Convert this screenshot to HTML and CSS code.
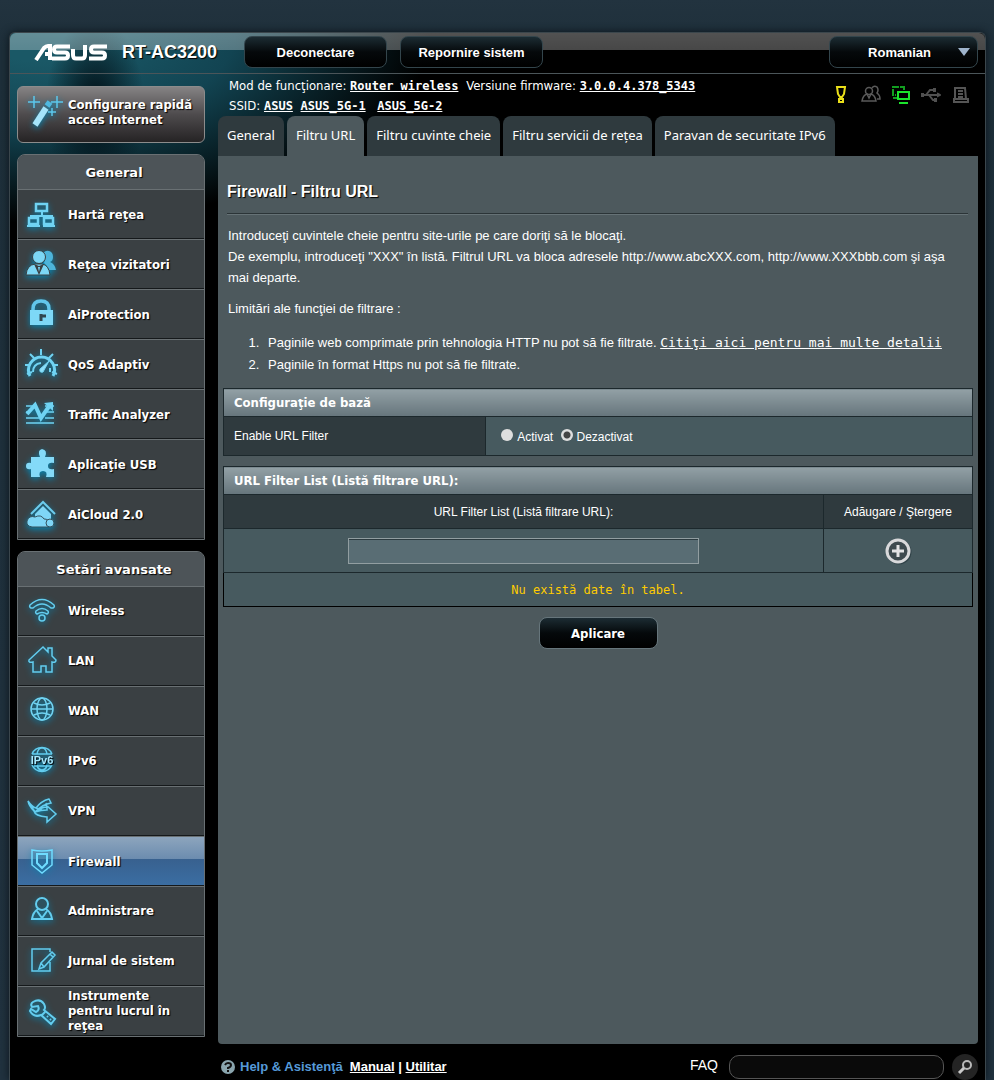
FILE: index.html
```html
<!DOCTYPE html>
<html lang="ro">
<head>
<meta charset="utf-8">
<title>ASUS RT-AC3200 - Filtru URL</title>
<link rel="stylesheet" href="styles.css">
</head>
<body>
<div class="frame">
  <header class="topbar">
    <svg class="logo" width="73" height="17" viewBox="0 0 73 17" role="img" aria-label="ASUS" fill="none" stroke="#fff" stroke-width="4">
      <path d="M2 16 10 4q2-2 4-2h2v14M11 10h5M36 2.500H23q-3 0-3 3t3 3h8q3 0 3 3t-3 3H18M39 5v6q0 3.500 3 3.500h6q3 0 3-3.500V1M73 2.500H60q-3 0-3 3t3 3h8q3 0 3 3t-3 3H55"/>
    </svg>
    <span class="model">RT-AC3200</span>
    <button class="btn btn-top" type="button">Deconectare</button>
    <button class="btn btn-top" type="button">Repornire sistem</button>
    <div class="lang">
      <select class="btn lang-select" aria-label="Limbă"><option>Romanian</option></select>
      <svg class="lang-arrow" width="12" height="8" viewBox="0 0 12 8"><path fill="#9fb4cc" d="M0 0h12L6 8z"/></svg>
    </div>
  </header>

  <div class="columns">
    <nav class="sidebar">
      <a class="quick" href="#">
        <svg class="ico" width="36" height="36" viewBox="0 0 36 36" fill="none" stroke="#5cc8ec"><path stroke-width="6" stroke="#a5e4fa" d="M7 31 18 14"/><path stroke-width="6" stroke="#4fb9e0" d="m19 12 3-4"/><path stroke-width="1.500" d="M6 2v12M0 8h12M29 2v12M23 8h12M24 14v8M20 18h8"/></svg>
        <span>Configurare rapidă acces Internet</span>
      </a>

      <section class="menu">
        <h2 class="menu-title">General</h2>
        <a class="item" href="#"><svg class="ico" width="34" height="34" viewBox="0 0 34 34" fill="none" stroke="#6fd3f3" stroke-width="2.500"><path d="M11 6h11v7H11zM4 20h9v6H4zM19 20h9v6h-9z"/><path stroke-width="2" d="M17 14v3M6 20v-2h21v2M2 28h13M18 28h12"/></svg><span>Hartă reţea</span></a>
        <a class="item" href="#"><svg class="ico" width="34" height="34" viewBox="0 0 34 34"><path fill="#4db4da" d="M18 6q2-4 6-3 4 1 4 6 0 4-3 5 5 2 6 8h-7q-2-5-5-7 2-4-1-9z"/><g fill="#7cd7f5" stroke="#3a4043"><circle cx="14" cy="9" r="6.500"/><path d="M1 27q1-10 9-11h7q7 1 8 11z"/></g><path fill="#3a4043" d="m9 16 5 11 5-11-5 2z"/><path fill="#7cd7f5" d="m13 19 1 5 1-5z"/></svg><span>Reţea vizitatori</span></a>
        <a class="item" href="#"><svg class="ico" width="34" height="34" viewBox="0 0 34 34"><path fill="none" stroke="#62c6ea" stroke-width="3.500" d="M8 13v-2q0-8 8-8t8 8v2"/><path fill="#7dd8f7" d="M5 12h23v15H5z"/><path stroke="#2f4650" stroke-width="3" d="M16 16v7M17 18h4"/></svg><span>AiProtection</span></a>
        <a class="item" href="#"><svg class="ico" width="34" height="34" viewBox="0 0 34 34" fill="none" stroke="#6fd3f3"><path stroke-width="3" d="M5 28A13 13 0 1 1 28 28"/><path stroke-width="2" d="M16 1v6M5 6l4 4M28 6l-4 4M0 17h5M33 17h-5M2 26l5-2M32 26l-5-2"/><path stroke-width="2" d="M8 24q0-8 8-9M25 24v-4"/><path fill="#8fe0fa" d="m24 13-9 8q-1 4 3 3z"/></svg><span>QoS Adaptiv</span></a>
        <a class="item" href="#"><svg class="ico" width="34" height="34" viewBox="0 0 34 34" fill="none" stroke="#6fd3f3"><path stroke-width="1.500" d="M1 8h7M20 8h9M1 14h3M12 14h3M22 14h7M1 20h13M20 20h9M1 25h28"/><path stroke-width="4" d="m2 16 8-9 6 13 9-13"/><path fill="#6fd3f3" stroke="none" d="m19 5 9-1v9z"/></svg><span>Traffic Analyzer</span></a>
        <a class="item" href="#"><svg class="ico" width="34" height="34" viewBox="0 0 34 34"><path fill="#84daf8" d="M6 9h9q-3-7 2-8 6 1 3 8h9v6q-6-1-6 3t6 3v8h-8q2-6-3-6t-3 6H6v-8q-5 1-5-3t5-3z"/></svg><span>Aplicaţie USB</span></a>
        <a class="item" href="#"><svg class="ico" width="34" height="34" viewBox="0 0 34 34" fill="#7fd6f6"><path fill="none" stroke="#6ccced" stroke-width="2" d="m6 16 12-12 12 12"/><path d="m18 8 8 8v8H10v-8z"/><g stroke="#34525e"><path d="M7 29q-6-1-5-6 2-6 8-4 6-3 9 2 5 0 5 4v4z"/><circle cx="25" cy="25" r="4"/></g></svg><span>AiCloud 2.0</span></a>
      </section>

      <section class="menu menu-advanced">
        <h2 class="menu-title">Setări avansate</h2>
        <a class="item" href="#"><svg class="ico" width="34" height="34" viewBox="0 0 34 34" fill="none" stroke="#63cdef" stroke-width="1.500"><path d="M5 12q12-11 24 0 1 2-1 3h-2q-9-8-18 0H6q-2-1-1-3zM11 18q6-5 12 0 1 2-1 3-5-3-10 0-2-1-1-3z"/><circle cx="17" cy="25" r="3"/></svg><span>Wireless</span></a>
        <a class="item" href="#"><svg class="ico" width="34" height="34" viewBox="0 0 34 34" fill="none" stroke="#63cdef" stroke-width="1.500"><path d="m4 17 14-13 5 5V5h4v8l4 4q0 3-4 2v10h-6v-6h-5v6H8V19q-5 1-4-2z"/></svg><span>LAN</span></a>
        <a class="item" href="#"><svg class="ico" width="34" height="34" viewBox="0 0 34 34" fill="none" stroke="#70d3f2" stroke-width="1.500"><circle cx="17" cy="16" r="11"/><ellipse cx="17" cy="16" rx="5" ry="11"/><path d="M9 10q8 4 16 0M6 16h22M9 22q8-4 16 0"/></svg><span>WAN</span></a>
        <a class="item" href="#"><svg class="ico" width="34" height="34" viewBox="0 0 34 34" fill="none" stroke="#63cdef" stroke-width="1.500"><path d="M7 11a11 11 0 0 1 20 0M7 22a11 11 0 0 0 20 0M12 11q1-6 5-6t5 6M12 22q1 5 5 5t5-5M7 11h20M9 23h17"/><text class="ico-text" x="17" y="21" text-anchor="middle">IPv6</text></svg><span>IPv6</span></a>
        <a class="item" href="#"><svg class="ico" width="34" height="34" viewBox="0 0 34 34" fill="none" stroke="#63cdef" stroke-width="1.500"><path d="M3 8q4 6 8 7 5-7 13-9l2 4q-8 1-16 9M10 19q7-5 12-5l-1-4M10 19q6-2 12-2v-4l9 8-9 8v-5Q10 23 9 18 4 13 3 8zM11 15l6 2"/></svg><span>VPN</span></a>
        <a class="item item-active" href="#"><svg class="ico" width="34" height="34" viewBox="0 0 34 34" fill="none" stroke="#6fdcff" stroke-width="1.500"><path d="M7 6q10 2 20 0v15l-10 8-10-8z"/><path stroke-width="2" d="M12 10h10v9l-5 5-5-5z"/></svg><span>Firewall</span></a>
        <a class="item" href="#"><svg class="ico" width="34" height="34" viewBox="0 0 34 34" fill="none" stroke="#63cdef" stroke-width="2"><circle cx="17" cy="11" r="6"/><path d="M13 16q-5 3-6 10h20q-1-7-6-10M12 18l5 7 5-7"/></svg><span>Administrare</span></a>
        <a class="item" href="#"><svg class="ico" width="34" height="34" viewBox="0 0 34 34" fill="none" stroke="#63cdef" stroke-width="1.500"><path d="M25 19v9H7V6h18v3M14 26l2-6L27 9l3 3-11 12zM25 11l3 3M16 20l3 4"/></svg><span>Jurnal de sistem</span></a>
        <a class="item" href="#"><svg class="ico" width="34" height="34" viewBox="0 0 34 34" fill="none" stroke="#63cdef" stroke-width="2"><path d="M8 9q7-4 11 2 2 4 0 6l11 9-4 5-10-9q-7 3-11-4l1-2 5 3q4-2 2-6l-6 1q-2-3 1-5zM20 19l-4 4M22 23l1 1M25 26l1 1"/></svg><span>Instrumente pentru lucrul în reţea</span></a>
      </section>
    </nav>

    <main class="content">
      <div class="info">
        <div class="info-text">
          <p>Mod de funcţionare: <a href="#">Router wireless</a> <span class="fw">Versiune firmware:</span> <a href="#">3.0.0.4.378_5343</a></p>
          <p class="ssid">SSID: <a href="#">ASUS</a> <a href="#">ASUS_5G-1</a> <a href="#" class="ssid-last">ASUS_5G-2</a></p>
        </div>
        <div class="status">
          <svg width="20" height="20" viewBox="0 0 20 20" fill="none" stroke="#eadf19" stroke-width="2"><path d="M6 2h8l-1 7-2 3H9L7 9zM8 14h4v3H8z"/></svg>
          <svg width="20" height="20" viewBox="0 0 20 20" fill="none" stroke="#5a5a5a" stroke-width="1.500"><circle cx="8" cy="6" r="3.500"/><path d="M11 3q2-3 5-1 2 3 0 6 3 2 3 6h-3M6 9q-4 1-5 7h14q-1-6-5-7l-2 4z"/></svg>
          <svg width="20" height="20" viewBox="0 0 20 20" fill="none" stroke="#1be32c" stroke-width="2"><path stroke="#129e20" stroke-dasharray="7 1" d="M13 5V2H2v8h3M2 13h4"/><path d="M7 7h11v7H7zM8 18h9"/></svg>
          <svg width="20" height="20" viewBox="0 0 20 20" fill="none" stroke="#505050" stroke-width="2"><path d="M1 10h17M5 10l4-5h4M8 10l4 5h3"/><path fill="#505050" d="m17 9 2 1-2 1zM1 9h1v2H1zM13 4h1v2h-1zM14 14h1v2h-1z"/></svg>
          <svg width="20" height="20" viewBox="0 0 20 20" fill="none" stroke="#555" stroke-width="2"><path d="M4 14V3h10l1 11M7 6h5M7 9h5M7 12h5M3 14h14v3H3z"/></svg>
        </div>
      </div>

      <nav class="tabs">
        <a class="tab" href="#">General</a>
        <a class="tab tab-active" href="#">Filtru URL</a>
        <a class="tab" href="#">Filtru cuvinte cheie</a>
        <a class="tab" href="#">Filtru servicii de reţea</a>
        <a class="tab" href="#">Paravan de securitate IPv6</a>
      </nav>

      <form class="panel">
        <h1 class="title">Firewall - Filtru URL</h1>
        <div class="desc">
          <p>Introduceţi cuvintele cheie pentru site-urile pe care doriţi să le blocaţi.<br>De exemplu, introduceţi "XXX" în listă. Filtrul URL va bloca adresele http://www.abcXXX.com, http://www.XXXbbb.com şi aşa mai departe.</p>
          <p>Limitări ale funcţiei de filtrare :</p>
          <ol>
            <li>Paginile web comprimate prin tehnologia HTTP nu pot să fie filtrate. <a href="#">Citiţi aici pentru mai multe detalii</a></li>
            <li>Paginile în format Https nu pot să fie filtrate.</li>
          </ol>
        </div>

        <table class="grid">
          <thead><tr><th class="bar" colspan="2">Configuraţie de bază</th></tr></thead>
          <tbody><tr class="row-basic">
            <th class="label" scope="row">Enable URL Filter</th>
            <td class="options">
              <label><input class="radio" type="radio" name="enable">Activat</label>
              <label><input class="radio" type="radio" name="enable" checked>Dezactivat</label>
            </td>
          </tr></tbody>
        </table>

        <table class="grid grid-list">
          <thead>
            <tr><th class="bar" colspan="2">URL Filter List (Listă filtrare URL):</th></tr>
            <tr class="row-head"><th>URL Filter List (Listă filtrare URL):</th><th class="col-action">Adăugare / Ştergere</th></tr>
          </thead>
          <tbody>
            <tr class="row-input">
              <td><input class="url" type="text" aria-label="URL Filter List"></td>
              <td><button class="add" type="button" aria-label="Adăugare"><svg width="28" height="28" viewBox="0 0 28 28" fill="none"><circle cx="15" cy="15" r="11" stroke="#23343a" stroke-width="3" opacity=".6"/><circle cx="14" cy="14" r="11" fill="#3e4a4f" stroke="#d9d9db" stroke-width="3"/><path stroke="#e3e3e5" stroke-width="3" d="M14 8v12M8 14h12"/></svg></button></td>
            </tr>
            <tr class="row-empty"><td colspan="2">Nu există date în tabel.</td></tr>
          </tbody>
        </table>
        <div class="actions"><button class="btn btn-apply" type="button">Aplicare</button></div>
      </form>

      <footer class="footer">
        <svg width="14" height="14" viewBox="0 0 14 14"><circle cx="7" cy="7" r="7" fill="#8aa5ae"/><path fill="none" stroke="#111" stroke-width="2" d="M4 5q1-2 3-2 3 0 3 2t-3 3v1M7 10v2"/></svg>
        <span class="help">Help &amp; Asistenţă</span>
        <span class="links"><a href="#">Manual</a> | <a href="#">Utilitar</a></span>
        <label class="faq" for="faq">FAQ</label>
        <input class="search" id="faq" type="text">
        <button class="search-btn" type="button" aria-label="Caută"><svg width="26" height="26" viewBox="0 0 26 26" fill="none"><circle cx="13" cy="13" r="13" fill="#242424"/><circle cx="15" cy="11" r="4" stroke="#b9b9b9" stroke-width="2"/><path stroke="#c9c9c9" stroke-width="3" d="m12 14-5 5"/></svg></button>
      </footer>
    </main>
  </div>
</div>
</body>
</html>
```
FILE: styles.css
```css
* { box-sizing: border-box; }

body {
  margin: 0;
  padding: 32px 8px 0 9px;
  min-height: 100vh;
  display: flex;
  background: linear-gradient(#22333f, #1e2f3a 50px, #21323f);
  color: #fff;
  font-family: "Liberation Sans", Arial, sans-serif;
  font-size: 13px;
}

h1, h2, p, ol { margin: 0; }
a { color: inherit; }
button, input, select { font: inherit; color: inherit; }

.frame {
  flex: 1;
  min-width: 0;
  display: flex;
  flex-direction: column;
  border: 1px solid #3b464c;
  border-bottom: 0;
  border-radius: 6px 6px 0 0;
  background:
    radial-gradient(ellipse 50px 90px at 85px 75px, rgba(3, 20, 27, .9) 20%, transparent),
    radial-gradient(ellipse 390px 190px at 30px 0, #1a5866 15%, #124452 50%, transparent),
    #000;
  box-shadow: 0 0 8px #0b151c;
}

.topbar {
  display: flex;
  align-items: center;
  height: 41px;
  padding: 0 7px 2px 24px;
  border-bottom: 1px solid #4b5559;
  border-radius: 6px 6px 0 0;
  background: linear-gradient(rgba(255, 255, 255, .32), rgba(255, 255, 255, .28) 17px, transparent 17px);
}

.model {
  margin: 0 27px 0 15px;
  font-size: 18px;
  font-weight: bold;
  text-shadow: 1px 1px 1px #000;
}

.btn {
  height: 32px;
  border: 1px solid #33454c;
  border-radius: 8px;
  background: linear-gradient(#1c2c33, #05090b 50%, #000);
  font-size: 13px;
  font-weight: bold;
  text-align: center;
  text-shadow: 1px 1px 1px #000;
}

.btn-top { width: 143px; margin-right: 13px; }

.lang { position: relative; margin-left: auto; }
.lang-select {
  width: 149px;
  padding: 0 8px 0 0;
  appearance: none;
  text-align-last: center;
}
.lang-arrow { position: absolute; right: 8px; top: 12px; pointer-events: none; }

.columns {
  flex: 1;
  display: grid;
  grid-template-columns: 188px minmax(0, 1fr);
  gap: 13px;
  padding: 0 7px;
}

.sidebar {
  display: flex;
  flex-direction: column;
  gap: 11px;
  padding-top: 12px;
  font-family: "DejaVu Sans Condensed", "DejaVu Sans", Verdana, sans-serif;
  font-weight: bold;
  line-height: 15px;
  text-shadow: 1px 1px 1px #000;
}

.sidebar .ico {
  flex: none;
  filter: drop-shadow(0 2px 3px #0784b0);
}

.quick, .item {
  display: flex;
  align-items: center;
  gap: 9px;
  padding-left: 7px;
  text-decoration: none;
}

.quick {
  height: 57px;
  padding: 0 4px 6px 10px;
  gap: 4px;
  border: 1px solid #8c8c8c;
  border-radius: 6px;
  background: linear-gradient(#858384, #4e4b4d 50%, #252324);
}

.menu {
  border: 1px solid #697073;
  border-radius: 8px 8px 0 0;
  background: #3a4043;
  overflow: hidden;
}

.menu-title {
  height: 34px;
  padding-left: 6px;
  background: #4d5458;
  font-family: "DejaVu Sans", Verdana, sans-serif;
  font-size: 13px;
  line-height: 36px;
  text-align: center;
}

.item {
  height: 50px;
  border-top: 1px solid #697073;
  box-shadow: inset 0 -1px #15191b;
}

.item span { max-width: 120px; }
.menu-advanced .item { padding-bottom: 3px; }

.menu-advanced .item-active {
  padding-bottom: 1px;
  background: linear-gradient(#8da5bd, #6c8caf 22px, #38618f 22px, #3b6ea3);
}

.ico-text {
  fill: #a8e9ff;
  stroke: none;
  font: bold 11px "Liberation Sans", sans-serif;
}

.content { display: flex; flex-direction: column; }

.info {
  display: flex;
  justify-content: space-between;
  height: 42px;
  padding: 2px 7px 0 11px;
  font-family: "DejaVu Sans Condensed", "DejaVu Sans", Tahoma, sans-serif;
  line-height: 19px;
}
.info a {
  font-family: "DejaVu Sans Mono", monospace;
  font-size: 12px;
  font-weight: bold;
}
.fw { margin-left: 4px; }
.ssid a { margin-right: 4px; }
.ssid .ssid-last { margin-left: 4px; }

.status { display: flex; gap: 10px; padding-top: 9px; }

.tabs {
  display: flex;
  gap: 3px;
  font-family: "Noto Sans", Tahoma, sans-serif;
}
.tab {
  height: 40px;
  padding: 0 9px;
  border-radius: 8px 8px 0 0;
  background: #2f3a3e;
  line-height: 38px;
  text-decoration: none;
  white-space: nowrap;
}
.tab-active { background: #4d595d; }

.panel {
  flex: 1;
  padding: 0 5px;
  border-radius: 0 0 4px 4px;
  background: #4d595d;
}

.title {
  margin: 0 5px 11px 4px;
  padding-top: 26px;
  height: 58px;
  border-bottom: 1px solid #2b3437;
  box-shadow: 0 1px #667276;
  font-size: 16px;
  line-height: 20px;
  text-shadow: 1px 1px 1px #000;
}

.desc { padding: 0 5px; line-height: 21px; }
.desc p { margin-bottom: 10px; }
.desc ol { padding-left: 35px; margin: 13px 0 12px; }
.desc li { height: 22px; padding-left: 5px; }
.desc a { font-family: "DejaVu Sans Mono", monospace; }

.grid {
  width: 100%;
  border-collapse: collapse;
  background: #475a5f;
  font-size: 12px;
}
.grid th, .grid td { padding: 0; border: 1px solid #1c282c; }
.grid th { font-weight: normal; }
.grid .bar {
  height: 28px;
  padding: 0 10px;
  background: linear-gradient(#92a0a5, #66757c);
  font-family: "DejaVu Sans Condensed", "DejaVu Sans", sans-serif;
  font-size: 13px;
  font-weight: bold;
  text-align: left;
}
.row-basic { height: 39px; }
.grid .label { width: 35%; padding: 0 10px; background: #2f3a3e; text-align: left; }
.grid .options { padding: 0 15px; }
.options label { margin-right: 4px; }

.radio {
  width: 12px;
  height: 12px;
  margin: 0 4px 0 0;
  appearance: none;
  border-radius: 50%;
  background: #dedede;
}
.radio:checked { background: radial-gradient(#444 3px, #dedede 4px); }

.grid-list { margin-top: 10px; text-align: center; }
.row-head { height: 34px; background: #2f3a3e; }
.col-action { width: 149px; }
.row-input { height: 44px; }
.url {
  display: block;
  width: 351px;
  max-width: 100%;
  height: 26px;
  margin: 0 auto;
  border: 1px solid #929ea1;
  background: #596d74;
  box-shadow: inset 0 1px #2d3b40;
}
.add { display: block; margin: 0 auto; padding: 0; border: 0; background: none; height: 28px; }
.grid .row-empty td {
  height: 34px;
  border: 1px solid #000;
  color: #fc0;
  font-family: "DejaVu Sans Mono", monospace;
}

.actions { padding-top: 10px; text-align: center; }
.btn-apply {
  width: 119px;
  border-color: #66757b;
  font-family: "DejaVu Sans Condensed", "DejaVu Sans", sans-serif;
}

.footer {
  display: flex;
  align-items: center;
  height: 36px;
  padding: 9px 0 0 3px;
  font-weight: bold;
}
.help { margin: 0 7px 0 5px; color: #569ad8; }
.faq { margin: 0 11px 4px auto; font-size: 14px; font-weight: normal; }
.search {
  width: 215px;
  height: 24px;
  border: 1px solid #555;
  border-radius: 10px;
  background: #0a0a0a;
}
.search-btn { height: 26px; margin-left: 8px; padding: 0; border: 0; background: none; }
```
